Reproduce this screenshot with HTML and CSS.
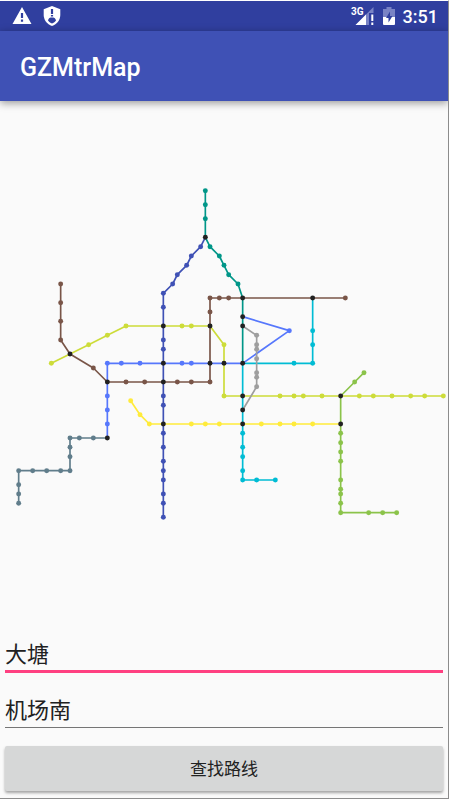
FILE: index.html
```html
<!DOCTYPE html>
<html lang="zh-CN">
<head>
<meta charset="utf-8">
<meta name="viewport" content="width=device-width, initial-scale=1">
<title>GZMtrMap</title>
<link rel="stylesheet" href="styles.css">
</head>
<body>
<div class="status">
  <svg class="status-icon" viewBox="0 0 20 20" aria-hidden="true">
    <path fill="#fff" fill-rule="evenodd" d="M10 1 L19.5 18 H.5 Z M8.900 7 V12 H11.100 V7 Z M8.900 13.500 V15.700 H11.100 V13.500 Z"/>
  </svg>
  <svg class="status-icon" viewBox="0 0 20 20" aria-hidden="true">
    <path fill="#fff" d="M10 0 L18.300 3.300 V9 C18.300 14 15 18 10 20 C5 18 1.700 14 1.700 9 V3.300 Z"/>
    <path fill="#303f9f" d="M8.900 3 H11.100 V8 H8.900 Z M8.900 9 H11.100 V10.500 H8.900 Z M6 14.500 C6.500 12 8 11.500 10 11.500 C12 11.500 13.500 12 14 14.500 C12.500 16.500 11.500 17 10 17.500 C8.500 17 7.500 16.500 6 14.500 Z"/>
  </svg>
  <span class="spacer"></span>
  <svg class="signal" viewBox="0 0 24 20" aria-hidden="true">
    <path fill="#7983c5" d="M22.500 1 V7 H18 V19 H4.500 Z"/>
    <path fill="#fff" d="M15 8.500 V19 H4.500 Z M20.300 8.500 H22.300 V15 H20.300 Z M20.300 16.500 H22.300 V19 H20.300 Z"/>
    <text class="network" x="0" y="9">3G</text>
  </svg>
  <svg class="battery" viewBox="0 0 12 18" aria-hidden="true">
    <path fill="#7983c5" d="M3.500 0 H8.500 V2 H12 V10 H0 V2 H3.500 Z"/>
    <path fill="#fff" d="M0 10 H12 V17 Q12 18 11 18 H1 Q0 18 0 17 Z"/>
    <path fill="#303f9f" d="M7 4.500 L3 11 H5.500 V15.500 L9.500 9 H7 Z"/>
  </svg>
  <span class="clock">3:51</span>
</div>
<header class="appbar"><h1>GZMtrMap</h1></header>
<main>
  <section class="map">
    <svg id="metro" viewBox="0 -1 96 72" role="img" aria-label="GZMtrMap">
      <polyline class="line yellow" points="28,45 30,48 32,50 35,50 41,50 44,50 47,50 52,50 56,50 60,50 63,50 67,50 73,50"/>
      <polyline class="line green" points="78,39 76,41 73,44 73,50 73,52 73,54 73,56 73,58 73,62 73,64 73,65 73,67 73,69 79,69 82,69 85,69"/>
      <polyline class="line lime" points="11,37 15,35 19,33 23,31 27,29 35,29 39,29 41,29 45,29 48,33 48,37 48,44 52,44 60,44 63,44 65,44 69,44 73,44 77,44 80,44 84,44 88,44 91,44 95,44"/>
      <polyline class="line brown" points="13,20 13,24 13,28 13,32 15,35 20,38 23,41 27,41 31,41 35,41 38,41 41,41 45,41 45,37 45,29 45,26 45,23 47,23 49,23 52,23 67,23 74,23"/>
      <polyline class="line indigo" points="44,10 43,12 41,14 40,16 38,18 37,20 35,22 35,25 35,29 35,32 35,34 35,37 35,41 35,44 35,46 35,50 35,52 35,55 35,58 35,60 35,62 35,65 35,67 35,70"/>
      <polyline class="line cyan" points="67,23 67,30 67,33 67,37 63,37 52,37 52,44 52,47 52,50 52,52 52,55 52,57 52,60 52,62 55,62 59,62"/>
      <polyline class="line blue" points="23,53 23,50 23,47 23,44 23,41 23,37 26,37 30,37 35,37 39,37 41,37 45,37 48,37 52,37 62,30 52,27"/>
      <polyline class="line teal" points="44,0 44,3 44,6 44,10 45,12 47,14 48,16 49,18 51,20 52,23 52,27 52,29 52,37"/>
      <polyline class="line gray" points="52,29 55,31 55,33 55,34 55,36 55,39 55,40 55,42 52,47"/>
      <polyline class="line slate" points="23,53 20,53 17,53 15,53 15,55 15,57 15,60 13,60 10,60 7,60 4,60 4,63 4,65 4,67"/>
    </svg>
  </section>
  <form class="search">
    <input class="field active" type="text" aria-label="起点" value="大塘">
    <input class="field" type="text" aria-label="终点" value="机场南">
    <button class="submit" type="button">查找路线</button>
  </form>
</main>
<script src="map.js"></script>
</body>
</html>
```
FILE: styles.css
```css
* { box-sizing: border-box; }

body {
  margin: 0;
  min-height: 100vh;
  display: flex;
  flex-direction: column;
  background: #fafafa;
  border-top: 1px solid #fff;
  border-right: 1px solid #8c8c8c;
  border-bottom: 1px solid #8c8c8c;
  font-family: Roboto, "Noto Sans CJK SC", sans-serif;
  color: #212121;
}

.status {
  display: flex;
  align-items: center;
  height: 30px;
  padding: 0 10px 0 12px;
  background: #303f9f;
  color: #fff;
}

.status-icon { width: 20px; height: 20px; margin-right: 10px; }
.spacer { flex: 1; }
.signal { width: 24px; height: 20px; margin-right: 8px; overflow: visible; }
.battery { width: 12px; height: 18px; margin-right: 8px; }
.network { font-size: 10px; font-weight: 700; fill: #fff; }
.clock { font-size: 18px; line-height: 30px; font-weight: 500; padding-top: 1px; }

.appbar {
  display: flex;
  align-items: center;
  height: 70px;
  padding: 4px 20px 0;
  background: #3f51b5;
  color: #fff;
  box-shadow: 0 2px 8px rgba(0, 0, 0, .4);
}

h1 { margin: 0; font-size: 25px; line-height: 32px; font-weight: 500; }

main { flex: 1; display: flex; flex-direction: column; }
.map { flex: 1; display: flex; align-items: center; }
#metro { display: block; width: 100%; }

.line { fill: none; stroke: currentColor; stroke-width: .36; stroke-linejoin: round; }
.station { fill: currentColor; }
.yellow { color: #ffeb3b; }
.green { color: #8bc34a; }
.lime { color: #cddc39; }
.brown { color: #795548; }
.indigo { color: #3f51b5; }
.cyan { color: #00bcd4; }
.blue { color: #5677fc; }
.teal { color: #009688; }
.gray { color: #9e9e9e; }
.slate { color: #607d8b; }
.interchange { color: #212121; }

.search {
  display: flex;
  flex-direction: column;
  padding: 30px 5px 7px;
}

.field {
  width: 100%;
  height: 37px;
  margin-bottom: 18px;
  padding: 0 0 2px;
  border: 0;
  border-bottom: 1px solid #757575;
  border-radius: 0;
  outline: 0;
  background: transparent;
  color: inherit;
  font: 22px/32px Roboto, "Noto Sans CJK SC", sans-serif;
}

.field.active { border-bottom: 3px solid #ff4081; }

.submit {
  height: 45px;
  padding: 0;
  border: 0;
  border-radius: 2px;
  background: #d6d7d7;
  box-shadow: 0 2px 3px rgba(0, 0, 0, .35);
  color: inherit;
  font: 17px/24px Roboto, "Noto Sans CJK SC", sans-serif;
}
```
FILE: map.js
```js
// Every vertex of a line is a station; one shared by several lines is an interchange.
const svg = document.getElementById("metro");
const stations = new Map();

for (const line of svg.querySelectorAll(".line")) {
  for (const point of line.getAttribute("points").split(" ")) {
    const color = line.classList[1];
    const known = stations.get(point);
    stations.set(point, known && known !== color ? "interchange" : color);
  }
}

for (const [point, kind] of stations) {
  const [x, y] = point.split(",");
  const dot = document.createElementNS("http://www.w3.org/2000/svg", "circle");
  dot.setAttribute("class", "station " + kind);
  dot.setAttribute("cx", x);
  dot.setAttribute("cy", y);
  dot.setAttribute("r", ".53");
  svg.append(dot);
}
```
